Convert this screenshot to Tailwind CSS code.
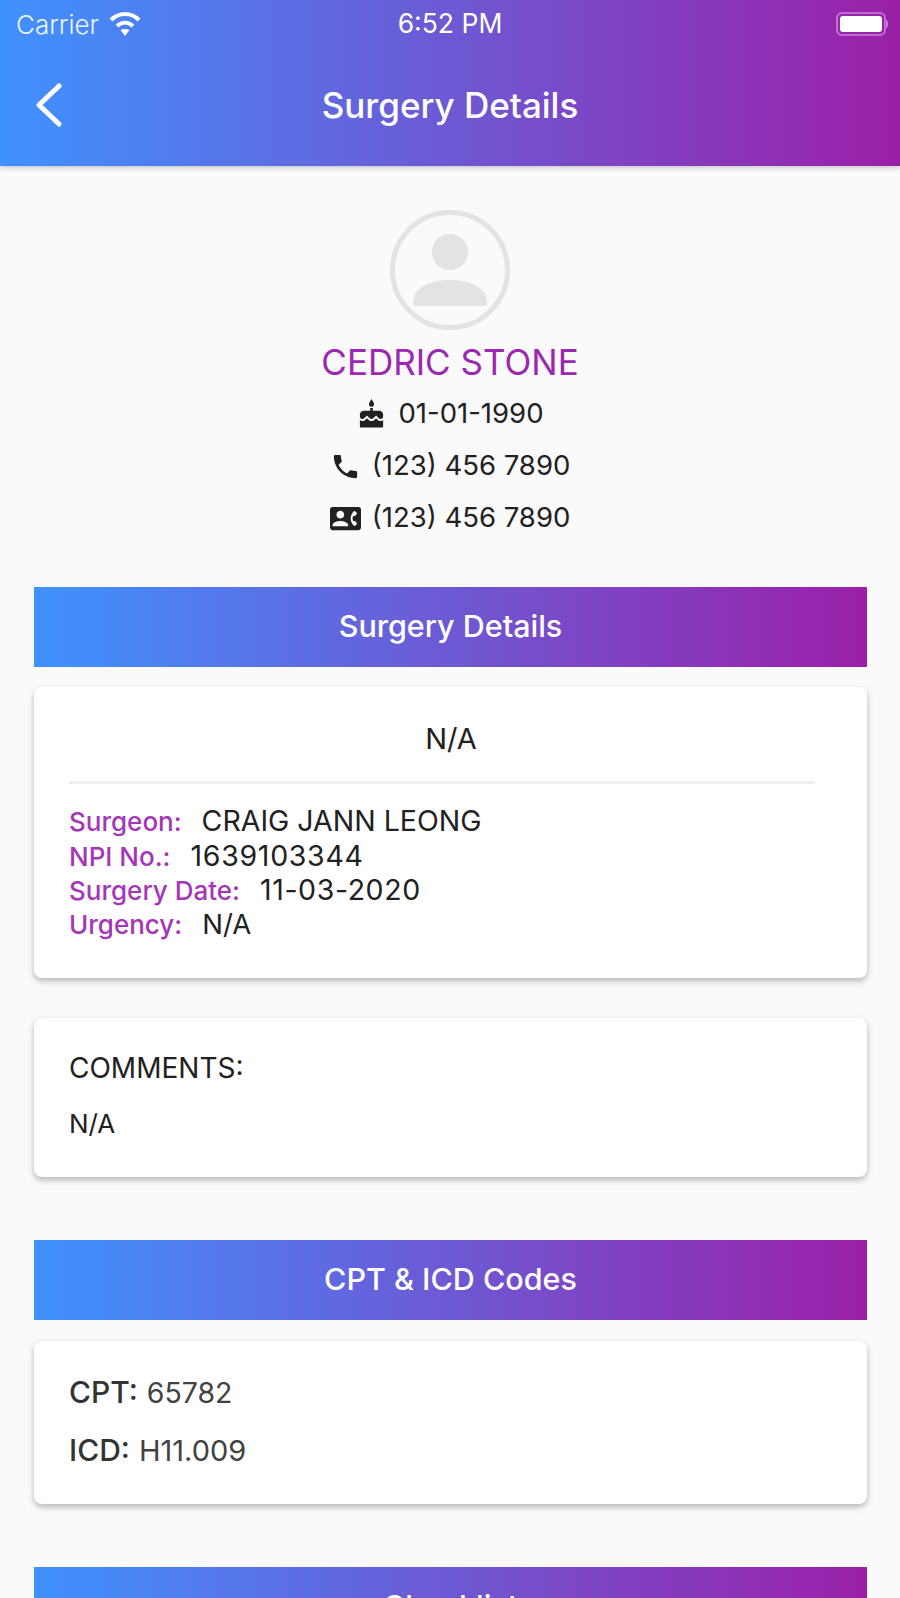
<!DOCTYPE html>
<html lang="en">
<head>
    <meta charset="UTF-8">
    <meta name="viewport" content="width=device-width, initial-scale=1.0">
    <title>Surgery Details</title>
    <script src="https://cdn.jsdelivr.net/npm/@tailwindcss/browser@4"></script>
</head>
<body class="bg-[#fafafa] font-['Inter',sans-serif] text-[#212121]">
<div class="h-[1598px] w-[900px] overflow-hidden">
    <!-- app bar -->
    <header class="h-[166px] bg-[linear-gradient(90deg,#3f92ff,#9c1fa8)] text-white shadow-[0_2px_5px_rgba(0,0,0,0.2)]">
        <div class="h-[48px] flex items-center justify-between pl-4 pr-[12px] relative">
            <div class="flex items-center gap-[10px]">
                <span class="text-[26px] text-white/90 font-light">Carrier</span>
                <svg width="32" height="26" viewBox="0 0 32 26" fill="none" stroke="white" stroke-width="4">
                    <path d="M2 9c8-8 20-8 28 0"/>
                    <path d="M8 15c5-4.500 11-4.500 16 0"/>
                    <path d="M16 25l-4.500-6c3-1.500 6-1.500 9 0z" fill="white" stroke="none"/>
                </svg>
            </div>
            <span class="absolute left-0 right-0 text-center text-[26.500px] font-normal">6:52 PM</span>
            <div class="flex items-center">
                <div class="w-[50px] h-[24px] rounded-[6px] border-2 border-white/35 p-[2px]">
                    <div class="h-full bg-white rounded-[3px]"></div>
                </div>
                <div class="w-[2px] h-[8px] bg-white/40 rounded-r"></div>
            </div>
        </div>
        <div class="h-[114px] flex items-center justify-center relative">
            <svg class="absolute left-[34px] top-[35px]" width="30" height="44" viewBox="0 0 30 44" fill="none" stroke="white" stroke-width="5" stroke-linecap="round" stroke-linejoin="round">
                <path d="M25 3L5 22l20 19" />
            </svg>
            <h1 class="text-[35px] font-medium">Surgery Details</h1>
        </div>
    </header>

    <!-- patient -->
    <section class="flex flex-col items-center pt-[44px]">
        <div class="w-[120px] h-[120px] rounded-full border-[5px] border-[#e3e3e3] flex items-center justify-center">
            <svg width="76" height="76" viewBox="0 0 76 76" fill="#e3e3e3">
                <circle cx="38" cy="20" r="18"/>
                <path d="M1 72V70C1 55 20 48 38 48s37 7 37 22v2q0 2-2 2H3q-2 0-2-2z"/>
            </svg>
        </div>
        <div class="text-[35px] leading-[40px] text-[#9c27b0] mt-[12px]">CEDRIC STONE</div>
        <div class="flex items-center gap-[11px] h-[52px] text-[27.500px] mt-[6px]">
            <svg width="31" height="31" viewBox="0 0 24 24" fill="#212121"><path d="M12 6c1.110 0 2-.900 2-2 0-.380-.100-.730-.290-1.030L12 0l-1.710 2.970c-.190.300-.290.650-.290 1.030 0 1.100.900 2 2 2zm4.600 9.990l-1.070-1.070-1.080 1.070c-1.300 1.300-3.580 1.310-4.890 0l-1.070-1.070-1.090 1.070C6.750 16.640 5.880 17 4.960 17c-.730 0-1.400-.230-1.960-.610V21c0 .550.450 1 1 1h16c.550 0 1-.450 1-1v-4.610c-.560.380-1.230.610-1.960.610-.920 0-1.790-.360-2.440-1.010zM18 9h-5V7h-2v2H6c-1.660 0-3 1.340-3 3v1.540c0 1.080.880 1.960 1.960 1.960.520 0 1.020-.200 1.380-.570l2.140-2.130 2.130 2.130c.740.740 2.030.740 2.770 0l2.140-2.130 2.130 2.130c.370.370.860.570 1.380.570 1.080 0 1.960-.880 1.960-1.960V12C21 10.340 19.660 9 18 9z"/></svg>
            <span>01-01-1990</span>
        </div>
        <div class="flex items-center gap-[11px] h-[52px] text-[27.500px]">
            <svg width="31" height="31" viewBox="0 0 24 24" fill="#212121"><path d="M6.620 10.790c1.440 2.830 3.760 5.140 6.590 6.590l2.200-2.200c.270-.270.670-.360 1.020-.240 1.120.370 2.330.570 3.570.570.550 0 1 .450 1 1V20c0 .550-.450 1-1 1-9.390 0-17-7.610-17-17 0-.550.450-1 1-1h3.500c.550 0 1 .450 1 1 0 1.250.200 2.450.570 3.570.110.350.030.740-.250 1.020l-2.200 2.200z"/></svg>
            <span>(123) 456 7890</span>
        </div>
        <div class="flex items-center gap-[11px] h-[52px] text-[27.500px]">
            <svg width="31" height="31" viewBox="0 0 24 24" fill="#212121"><path d="M22 3H2C.900 3 0 3.900 0 5v14c0 1.100.900 2 2 2h20c1.100 0 1.990-.900 1.990-2L24 5c0-1.100-.900-2-2-2zM8 6c1.660 0 3 1.340 3 3s-1.340 3-3 3-3-1.340-3-3 1.340-3 3-3zm6 12H2v-1c0-2 4-3.100 6-3.100s6 1.100 6 3.100v1zm3.850-4h1.640L21 16l-1.990 1.990c-1.310-.980-2.280-2.380-2.730-3.990-.180-.640-.280-1.310-.280-2s.100-1.360.280-2c.450-1.620 1.420-3.010 2.730-3.990L21 8l-1.510 2h-1.640c-.220.630-.350 1.300-.350 2s.130 1.370.350 2z"/></svg>
            <span>(123) 456 7890</span>
        </div>
    </section>

    <main class="pl-[34px] pr-[33px]">
        <div class="mt-[43px] h-[80px] pb-[2px] bg-[linear-gradient(90deg,#3f92ff,#9c1fa8)] flex items-center justify-center text-white text-[30.500px] font-medium">Surgery Details</div>

        <div class="mt-[20px] h-[291px] bg-white rounded-[8px] shadow-[0_3px_6px_rgba(0,0,0,0.28)] pl-[35px] pr-[52px]">
            <div class="h-[97px] border-b-[3px] border-[#eeeeee] flex items-center justify-center text-[29px] pt-[9px]">
                <span class="translate-x-[9px]">N/A</span>
            </div>
            <div class="pt-[19px] text-[28.500px] leading-[35px]">
                <div class="flex items-baseline gap-[20px] h-[34.700px]"><span class="text-[26px] font-medium text-[#a536b8]">Surgeon:</span><span>CRAIG JANN LEONG</span></div>
                <div class="flex items-baseline gap-[20px] h-[34.700px]"><span class="text-[26px] font-medium text-[#a536b8]">NPI No.:</span><span class="tracking-[0.7px]">1639103344</span></div>
                <div class="flex items-baseline gap-[20px] h-[34.700px]"><span class="text-[26px] font-medium text-[#a536b8]">Surgery Date:</span><span class="tracking-[0.6px]">11-03-2020</span></div>
                <div class="flex items-baseline gap-[20px] h-[34.700px]"><span class="text-[26px] font-medium text-[#a536b8]">Urgency:</span><span class="text-[27.500px]">N/A</span></div>
            </div>
        </div>

        <div class="mt-[40px] h-[159px] bg-white rounded-[8px] shadow-[0_3px_6px_rgba(0,0,0,0.28)] px-[35px] pt-[32px]">
            <div class="text-[28px] leading-[36px]">COMMENTS:</div>
            <div class="text-[26px] leading-[36px] mt-[20px]">N/A</div>
        </div>

        <div class="mt-[63px] h-[80px] pb-[2px] bg-[linear-gradient(90deg,#3f92ff,#9c1fa8)] flex items-center justify-center text-white text-[30.500px] font-medium">CPT &amp; ICD Codes</div>

        <div class="mt-[21px] h-[163px] bg-white rounded-[8px] shadow-[0_3px_6px_rgba(0,0,0,0.28)] px-[35px] pt-[29px]">
            <div class="h-[36px] flex items-baseline gap-[9px]"><span class="text-[30px] font-medium text-[#333333]">CPT:</span><span class="text-[28.500px] text-[#424242]">65782</span></div>
            <div class="h-[36px] mt-[22px] flex items-baseline gap-[9px]"><span class="text-[30px] font-medium text-[#333333]">ICD:</span><span class="text-[29px] text-[#424242]">H11.009</span></div>
        </div>

        <div class="mt-[63px] h-[80px] pb-[2px] bg-[linear-gradient(90deg,#3f92ff,#9c1fa8)] flex items-center justify-center text-white text-[30.500px] font-medium">Checklist</div>
    </main>
</div>
</body>
</html>
